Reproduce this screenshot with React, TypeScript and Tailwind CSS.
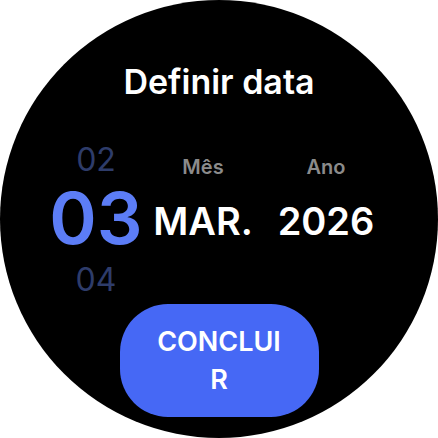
export default function App() {
  const font = { fontFamily: 'Inter, "Noto Sans", sans-serif' }
  return (
    <div className="w-[438px] h-[438px] bg-white" style={font}>
      <div className="w-[438px] h-[438px] rounded-full bg-black overflow-hidden flex flex-col items-center">
        <h1 className="pt-[62px] text-[34px] leading-[40px] font-semibold text-white">Definir data</h1>

        <div className="mt-[42px] flex items-start">
          {/* day picker */}
          <div className="w-[104px] flex flex-col items-center">
            <span className="text-[32px] leading-[32px] text-[#2e3c6a]">02</span>
            <span className="mt-[6px] text-[72px] leading-[72px] font-semibold text-[#5c7df6]">03</span>
            <span className="mt-[10px] text-[32px] leading-[32px] text-[#2e3c6a]">04</span>
          </div>
          <div className="w-[110px] mt-[13px] flex flex-col items-center">
            <span className="text-[20px] leading-[20px] font-semibold text-[#8b8b8b]">Mês</span>
            <span className="mt-[25px] text-[38px] leading-[38px] font-semibold text-white">MAR.</span>
          </div>
          <div className="w-[136px] mt-[13px] flex flex-col items-center">
            <span className="text-[20px] leading-[20px] font-semibold text-[#8b8b8b]">Ano</span>
            <span className="mt-[25px] text-[38px] leading-[38px] font-semibold text-white">2026</span>
          </div>
        </div>

        <button className="mt-[8px] w-[199px] h-[113px] shrink-0 rounded-[48px] bg-[#4668f5] flex items-center justify-center">
          <span className="w-[140px] break-all text-center text-[27px] leading-[38px] font-semibold text-white">
            CONCLUIR
          </span>
        </button>
      </div>
    </div>
  )
}
